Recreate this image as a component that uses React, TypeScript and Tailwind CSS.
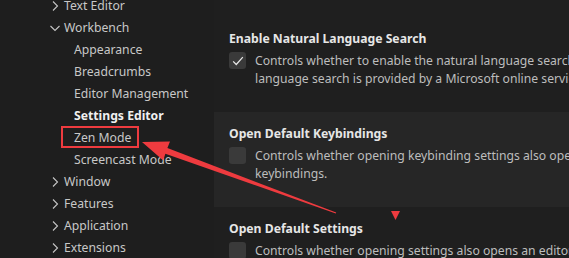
import React from 'react';

type NavItem = { label: string; level: 0 | 1; open?: boolean; active?: boolean; marked?: boolean };

const NAV: NavItem[] = [
  { label: 'Text Editor', level: 0 },
  { label: 'Workbench', level: 0, open: true },
  { label: 'Appearance', level: 1 },
  { label: 'Breadcrumbs', level: 1 },
  { label: 'Editor Management', level: 1 },
  { label: 'Settings Editor', level: 1, active: true },
  { label: 'Zen Mode', level: 1, marked: true },
  { label: 'Screencast Mode', level: 1 },
  { label: 'Window', level: 0 },
  { label: 'Features', level: 0 },
  { label: 'Application', level: 0 },
  { label: 'Extensions', level: 0 },
];

const SETTINGS = [
  {
    title: 'Enable Natural Language Search',
    checked: true,
    lines: [
      'Controls whether to enable the natural language search mode for settings. The natural',
      'language search is provided by a Microsoft online service.',
    ],
  },
  {
    title: 'Open Default Keybindings',
    checked: false,
    focused: true,
    lines: [
      'Controls whether opening keybinding settings also opens an editor showing all default',
      'keybindings.',
    ],
  },
  {
    title: 'Open Default Settings',
    checked: false,
    lines: ['Controls whether opening settings also opens an editor showing all default settings.'],
  },
];

function Chevron({ open }: { open?: boolean }) {
  return (
    <svg width="16" height="16" viewBox="0 0 16 16" className="shrink-0">
      {open ? (
        <path d="M3.5 6 L8 10.5 L12.5 6" fill="none" stroke="#c5c5c5" strokeWidth="1.1" />
      ) : (
        <path d="M6 3.5 L10.5 8 L6 12.5" fill="none" stroke="#c5c5c5" strokeWidth="1.1" />
      )}
    </svg>
  );
}

function Sidebar() {
  return (
    <div className="w-[214px] shrink-0 bg-[#1e1e1e]">
      <ul className="mt-[-5px]">
        {NAV.map((item) => (
          <li
            key={item.label}
            className={`flex h-[22px] items-center ${item.level === 0 ? 'pl-[47px]' : 'pl-[74px]'}`}
          >
            {item.level === 0 && <Chevron open={item.open} />}
            <span
              className={`relative whitespace-nowrap ${item.level === 0 ? 'ml-[1px]' : ''} ${
                item.active ? 'font-bold text-[#f0f0f0]' : 'text-[#c8c8c8]'
              }`}
            >
              {item.label}
              {/* annotation box */}
              {item.marked && (
                <span className="absolute left-[-13px] top-[-3px] h-[22px] w-[78px] border-2 border-[#ee3b3f]" />
              )}
            </span>
          </li>
        ))}
      </ul>
    </div>
  );
}

function Checkbox({ checked }: { checked: boolean }) {
  return (
    <div className="flex h-[17px] w-[17px] shrink-0 items-center justify-center rounded-[3px] bg-[#3a3a3a]">
      {checked && (
        <svg width="14" height="14" viewBox="0 0 16 16">
          <path d="M2.5 8.5 L6 12 L13.5 3.5" fill="none" stroke="#e8e8e8" strokeWidth="1.4" />
        </svg>
      )}
    </div>
  );
}

function SettingsList() {
  return (
    <div className="min-w-0 flex-1 overflow-hidden bg-[#1f1f1f] pt-[17px]">
      {SETTINGS.map((s) => (
        <div
          key={s.title}
          className={`h-[95px] pl-[15px] pt-[13px] ${s.focused ? 'bg-[#262626]' : ''}`}
        >
          <div className="h-[18px] whitespace-nowrap leading-[18px] font-bold text-[#e6e6e6]">{s.title}</div>
          <div className="mt-[4px] flex gap-[9px]">
            <Checkbox checked={s.checked} />
            <div className="leading-[18px] text-[#bdbdbd]">
              {s.lines.map((l) => (
                <div key={l} className="whitespace-nowrap">
                  {l}
                </div>
              ))}
            </div>
          </div>
        </div>
      ))}
    </div>
  );
}

export default function App() {
  return (
    <div
      className="relative flex h-[258px] w-[569px] overflow-hidden text-[12.2px]"
      style={{ fontFamily: '"Noto Sans", "Open Sans", sans-serif' }}
    >
      <Sidebar />
      <SettingsList />

      {/* annotations drawn over the screenshot */}
      <svg className="pointer-events-none absolute left-0 top-0" width="569" height="258">
        <polygon
          points="142,142 170,141.5 167.4,148.1 336.2,212.5 335.8,213.5 165.4,153.7 163,160.3"
          fill="#ee3b3f"
        />
        <polygon points="391,211 400,211 395.5,220" fill="#ee3b3f" />
      </svg>
    </div>
  );
}
